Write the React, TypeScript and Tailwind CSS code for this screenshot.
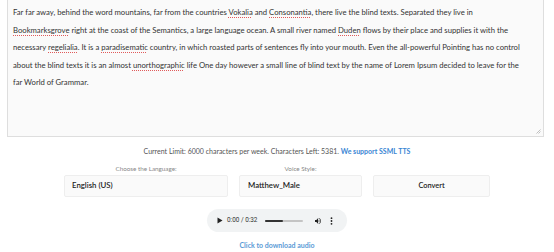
import React from "react";

const font = { fontFamily: "Lato, 'Noto Sans', sans-serif" };

function Miss({ children }: { children: React.ReactNode }) {
  return (
    <span className="underline decoration-dotted decoration-[#e05a5a] decoration-1 underline-offset-[1.5px]">
      {children}
    </span>
  );
}

function PlayerBar() {
  return (
    <div className="flex h-[23px] w-[140px] items-center rounded-full bg-[#f1f3f4] pl-[10px] pr-[10px] text-[#222]">
      <svg width="6" height="7" viewBox="0 0 6 7">
        <path d="M0.5 0.5 L5.5 3.5 L0.5 6.5 Z" fill="#222" />
      </svg>
      <span className="ml-[4px] text-[6.4px] text-[#333]" style={{ fontFamily: "Roboto, sans-serif" }}>
        0:00 / 0:32
      </span>
      <div className="ml-[8px] flex h-[2px] w-[38px] rounded-full bg-[#c4c4c4]">
        <div className="h-full w-[18px] rounded-full bg-[#333]" />
      </div>
      <svg className="ml-[11px]" width="8" height="8" viewBox="0 0 24 24">
        <path d="M3 9v6h4l5 5V4L7 9H3z" fill="#222" />
        <path d="M16.5 12A4.5 4.5 0 0 0 14 7.970v8.05A4.5 4.5 0 0 0 16.5 12z" fill="#222" />
        <path d="M14 3.23v2.06a7 7 0 0 1 0 13.42v2.06a9 9 0 0 0 0-17.54z" fill="#222" />
      </svg>
      <svg className="ml-[8px]" width="3" height="8" viewBox="0 0 3 8">
        <circle cx="1.5" cy="1.2" r="0.9" fill="#222" />
        <circle cx="1.5" cy="4" r="0.9" fill="#222" />
        <circle cx="1.5" cy="6.8" r="0.9" fill="#222" />
      </svg>
    </div>
  );
}

export default function App() {
  return (
    <div className="h-[252px] w-[554px] overflow-hidden bg-white" style={font}>
      <div className="relative mx-[7px] h-[137px] w-[537px] border border-t-0 border-[#dedede] bg-[#fafafa] pl-[5px] pt-[4px] text-[7.7px] leading-[17.5px] text-[#333]">
        <div className="whitespace-nowrap">
          Far far away, behind the word mountains, far from the countries <Miss>Vokalia</Miss> and{" "}
          <Miss>Consonantia</Miss>, there live the blind texts. Separated they live in
        </div>
        <div className="whitespace-nowrap">
          <Miss>Bookmarksgrove</Miss> right at the coast of the Semantics, a large language ocean. A small
          river named <Miss>Duden</Miss> flows by their place and supplies it with the
        </div>
        <div className="whitespace-nowrap">
          necessary <Miss>regelialia</Miss>. It is a <Miss>paradisematic</Miss> country, in which roasted
          parts of sentences fly into your mouth. Even the all-powerful Pointing has no control
        </div>
        <div className="whitespace-nowrap">
          about the blind texts it is an almost <Miss>unorthographic</Miss> life One day however a small line
          of blind text by the name of Lorem Ipsum decided to leave for the
        </div>
        <div className="whitespace-nowrap">far World of Grammar.</div>
        <svg className="absolute bottom-[2px] right-[2px]" width="5" height="5" viewBox="0 0 5 5">
          <path d="M4.5 0.5 L0.5 4.5 M4.5 2.5 L2.5 4.5" stroke="#999" strokeWidth="0.6" />
        </svg>
      </div>

      <div className="mt-[10px] text-center text-[7px] leading-[9px] text-[#555]">
        Current Limit: 6000 characters per week. Characters Left: 5381.{" "}
        <span className="font-bold text-[#3a86d4]">We support SSML TTS</span>
      </div>

      <div className="mt-[9px] flex justify-center gap-[11px]">
        <div className="flex w-[164px] flex-col items-center">
          <div className="text-[6.3px] leading-[8px] text-[#888]">Choose the Language:</div>
          <div className="mt-[2px] flex h-[22px] w-full items-center rounded-[2px] border border-[#eeeeee] bg-[#fafafa] pl-[7px] text-[7.8px] font-semibold text-[#222]">
            English (US)
          </div>
        </div>
        <div className="flex w-[123px] flex-col items-center">
          <div className="text-[6.3px] leading-[8px] text-[#888]">Voice Style:</div>
          <div className="mt-[2px] flex h-[22px] w-full items-center rounded-[2px] border border-[#eeeeee] bg-[#fafafa] pl-[8px] text-[7.8px] font-semibold text-[#222]">
            Matthew_Male
          </div>
        </div>
        <div className="flex w-[117px] flex-col">
          <div className="h-[8px]" />
          <div className="mt-[2px] flex h-[22px] w-full items-center justify-center rounded-[2px] border border-[#eeeeee] bg-[#fafafa] text-[7.4px] font-semibold text-[#222]">
            Convert
          </div>
        </div>
      </div>

      <div className="mt-[12px] flex justify-center">
        <PlayerBar />
      </div>

      <div className="mt-[9px] text-center text-[7px] font-bold leading-[9px] text-[#5a9ad6]">
        Click to download audio
      </div>
    </div>
  );
}
